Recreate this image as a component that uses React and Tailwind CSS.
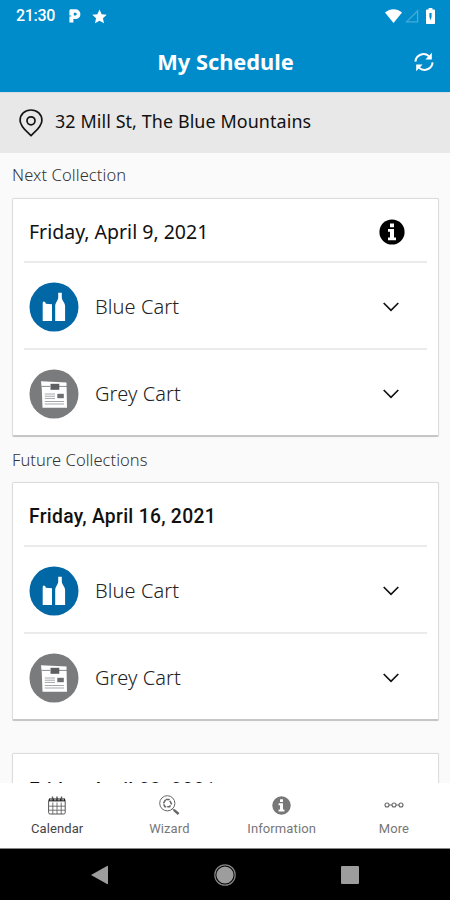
import React, { useState } from 'react';

const COLLECTIONS = [
  { id: 1, date: 'Friday, April 9, 2021', label: 'Next Collection', next: true, carts: ['Blue Cart', 'Grey Cart'] },
  { id: 2, date: 'Friday, April 16, 2021', label: 'Future Collections', carts: ['Blue Cart', 'Grey Cart'] },
  { id: 3, date: 'Friday, April 23, 2021', carts: [] },
];

function StatusBar() {
  return (
    <div className="flex h-8 items-center pl-4 pr-[15px] text-white">
      <span className="font-['Roboto',sans-serif] text-[16px] font-medium leading-8 tracking-[-0.3px]">21:30</span>
      <svg className="ml-[14px]" width="12" height="14" viewBox="0 0 12 14" aria-hidden="true">
        <path fillRule="evenodd" fill="currentColor" d="M2 .3H6.5A4.9 4.9 0 0 1 6.5 10.1H4.4V13.5H.4V7.6H2.2V6.4H.4V2C.4.9 1 .3 2 .3ZM4.8 3.8V6.6H6.3A1.4 1.4 0 0 0 6.3 3.8Z" />
      </svg>
      <svg className="ml-[11px]" width="15" height="15" viewBox="0 0 24 24" aria-hidden="true">
        <path fill="currentColor" d="M12 .8l3.4 7.5 8.2.9-6.1 5.5 1.7 8.1-7.2-4.1-7.2 4.1 1.7-8.1L.4 9.2l8.2-.9z" />
      </svg>
      <svg className="ml-auto" width="17" height="14" viewBox="0 0 17 14" aria-hidden="true">
        <path fill="currentColor" d="M0 3.6C5-1 12-1 17 3.6L8.5 14Z" />
      </svg>
      <svg className="ml-[3px] text-[#45abd9]" width="14" height="14" viewBox="0 0 14 14" aria-hidden="true">
        <path fill="none" stroke="currentColor" strokeWidth="1.3" d="M12.6 1.8V12.9H1.5Z" />
      </svg>
      <svg className="ml-[7px]" width="9" height="16" viewBox="0 0 9 16" aria-hidden="true">
        <path fill="currentColor" d="M2.6 0H6.4V1.5H8C8.6 1.5 9 1.9 9 2.5V15C9 15.6 8.6 16 8 16H1C.4 16 0 15.6 0 15V2.5C0 1.9.4 1.5 1 1.5H2.6Z" />
        <path fill="#008ccb" d="M3.4 5H5.6V8.5L4.9 11.5H4.1L3.4 8.5Z" />
      </svg>
    </div>
  );
}

function RefreshIcon() {
  return (
    <svg width="20" height="20" viewBox="0 0 20 20" fill="none" stroke="currentColor" strokeWidth="2" aria-hidden="true">
      <path d="M1.4 9.7A8.2 8.2 0 0 1 15 4.2" />
      <path d="M18.6 10.3A8.2 8.2 0 0 1 5 15.8" />
      <path fill="currentColor" stroke="none" d="M17.8 .8V7.4H11.4Z" />
      <path fill="currentColor" stroke="none" d="M2.2 19.2V12.6H8.6Z" />
    </svg>
  );
}

function PinIcon() {
  return (
    <svg width="24" height="28" viewBox="0 0 24 28" fill="none" stroke="#151515" strokeWidth="1.7" aria-hidden="true">
      <path d="M12 26.6C8.8 23.4 1.1 17.8 1.1 11.4C1.1 5.5 5.8 1 12 1S22.9 5.5 22.9 11.4C22.9 17.8 15.2 23.4 12 26.6Z" />
      <circle cx="12" cy="11.8" r="4" />
    </svg>
  );
}

function InfoIcon({ size }) {
  return (
    <svg width={size} height={size} viewBox="0 0 26 26" aria-hidden="true">
      <circle cx="13" cy="13" r="12.6" fill="currentColor" />
      <path fill="#fff" d="M11 4.5H15V8.2H11ZM9 10H15V18.5H17V21.3H9V18.5H11V12.7H9Z" />
    </svg>
  );
}

function BlueCartIcon() {
  return (
    <svg width="50" height="50" viewBox="0 0 50 50" aria-hidden="true">
      <circle cx="25" cy="25" r="24.5" fill="#0268a5" />
      <path fill="#fff" d="M14 19.4L16.2 19.9L16.8 21.8L23 22.2V39H13.7V21.5ZM29.2 10.8H32.8V15.5C33 19 36.1 20.5 36.1 24V39H26.2V24C26.2 20.5 29 19 29.2 15.5Z" />
    </svg>
  );
}

function GreyCartIcon() {
  return (
    <svg width="50" height="50" viewBox="0 0 50 50" aria-hidden="true">
      <circle cx="25" cy="25" r="24.5" fill="#797b7d" />
      <path fill="#fff" d="M12 12.3L37.5 13.5L38 38.7H13.5L12.8 20Z" />
      <path stroke="#797b7d" strokeWidth=".9" d="M12.5 17.4H21M30 17.4H38" />
      <path fill="#5d5f61" d="M21.5 14.8H30.3V20.8H21.5Z" />
      <path fill="#6c6e70" d="M28.3 24.8H34.8V29.2H28.3Z" />
      <path stroke="#a5a7a9" strokeWidth="1" d="M15.8 25H26M15.8 27.2H26M15.8 29.4H26M15.8 32.5H35M15.8 35H35" />
    </svg>
  );
}

const CART_ICONS = {
  'Blue Cart': <BlueCartIcon />,
  'Grey Cart': <GreyCartIcon />,
};

function Chevron() {
  return (
    <svg width="16" height="10" viewBox="0 0 16 10" fill="none" stroke="#111" strokeWidth="1.7" aria-hidden="true">
      <path d="M.7 1L8 8.3L15.3 1" />
    </svg>
  );
}

function CartRow({ name }) {
  return (
    <button type="button" className="flex h-[87px] w-full items-center border-t-2 border-[#ebebeb] pl-[5px] pr-7 pt-[2px] text-left">
      {CART_ICONS[name]}
      <span className="ml-4 font-['Noto_Sans',sans-serif] text-[20px] font-light tracking-[0.1px] text-[#222]">{name}</span>
      <span className="ml-auto">
        <Chevron />
      </span>
    </button>
  );
}

function CollectionCard({ date, next, carts }) {
  return (
    <section className="h-[239px] shrink-0 rounded-[2px] border border-b-2 border-[#dcdcdc] border-b-[#c6c6c6] bg-white px-[11px] shadow-[0_0_1px_#ddd]">
      <div className={`flex items-center justify-between pl-[5px] pr-[22px] ${carts.length ? 'h-[62px] pt-[3px]' : 'h-[67px] pt-1'}`}>
        <h3
          className={
            next
              ? "font-['Noto_Sans',sans-serif] text-[19.5px] text-[#111]"
              : "pt-[3px] font-['Roboto',sans-serif] text-[19.3px] font-medium tracking-[0.3px] text-[#111]"
          }
        >
          {date}
        </h3>
        {next && (
          <span className="text-black">
            <InfoIcon size={26} />
          </span>
        )}
      </div>
      {carts.map((name) => (
        <CartRow key={name} name={name} />
      ))}
    </section>
  );
}

function CalendarIcon() {
  return (
    <svg width="18" height="19" viewBox="0 0 18 19" fill="none" stroke="#555" aria-hidden="true">
      <rect x=".6" y="3" width="16.6" height="15" rx="1.5" />
      <path fill="#222" stroke="none" d="M1 2.5H17V5.4H1Z" />
      <path stroke="#fff" strokeWidth="1" d="M3 2.5V4.5M7 2.5V4.5M11 2.5V4.5M15 2.5V4.5" />
      <path strokeWidth="1.4" d="M4.5 .5V4.5M9 .5V4.5M13.5 .5V4.5" />
      <path strokeWidth=".8" d="M1 10.2H17M1 14.2H17M4.8 6.5V18M9 6.5V18M13.2 6.5V18" />
    </svg>
  );
}

function WizardIcon() {
  return (
    <svg width="21" height="20" viewBox="0 0 21 20" fill="none" stroke="#666" aria-hidden="true">
      <circle cx="8.3" cy="8.3" r="7.6" strokeWidth="1" />
      <path strokeWidth="1.5" strokeDasharray="4 1" d="M6.7 4.5H10L12.4 8.7L10.6 11.7H6L4.3 8.7Z" />
      <path strokeWidth="1" d="M13 13.2L15 15.2" />
      <path strokeWidth="2.4" d="M14.8 14.9L19.6 19" />
    </svg>
  );
}

function MoreIcon() {
  return (
    <svg width="20" height="6" viewBox="0 0 20 6" fill="none" stroke="#666" strokeWidth="1.1" aria-hidden="true">
      <path d="M5 3H8M12 3H15" />
      <circle cx="3" cy="3" r="2" />
      <circle cx="10" cy="3" r="2" />
      <circle cx="17" cy="3" r="2" />
    </svg>
  );
}

const TABS = [
  { name: 'Calendar', icon: <CalendarIcon /> },
  { name: 'Wizard', icon: <WizardIcon /> },
  { name: 'Information', icon: <InfoIcon size={19} /> },
  { name: 'More', icon: <MoreIcon /> },
];

export default function App() {
  const [activeTab, setActiveTab] = useState('Calendar');

  return (
    <div className="flex h-[900px] w-[450px] flex-col overflow-hidden bg-[#fafafa]">
      {/* Header */}
      <header className="h-[92px] shrink-0 bg-[#008ccb] text-white">
        <StatusBar />
        <div className="grid h-[60px] grid-cols-[40px_1fr_40px] items-center">
          <h1 className="col-start-2 pl-px text-center font-['Noto_Sans',sans-serif] text-[21.8px] font-bold leading-[58px]">My Schedule</h1>
          <button type="button" className="pl-1" aria-label="Refresh">
            <RefreshIcon />
          </button>
        </div>
      </header>

      {/* Address */}
      <div className="flex h-[61px] shrink-0 items-center border-t border-[#d5dee2] bg-[#e8e8e8] pl-[19px]">
        <PinIcon />
        <span className="ml-3 pb-[3px] font-['Noto_Sans',sans-serif] text-[17.9px] tracking-[0.1px] text-[#111]">32 Mill St, The Blue Mountains</span>
      </div>

      {/* Collections */}
      <main className="flex min-h-0 flex-1 flex-col overflow-hidden pl-3 pr-[11px]">
        {COLLECTIONS.map((c) => (
          <React.Fragment key={c.id}>
            <h2
              className={
                c.next
                  ? "h-[45px] shrink-0 font-['Noto_Sans',sans-serif] text-[16.5px] font-light leading-[44px] tracking-[0.1px] text-[#333]"
                  : c.label
                    ? "h-[45px] shrink-0 font-['Noto_Sans',sans-serif] text-[16.5px] font-light leading-[45px] tracking-[0.05px] text-[#333]"
                    : 'h-8 shrink-0'
              }
            >
              {c.label}
            </h2>
            <CollectionCard date={c.date} next={c.next} carts={c.carts} />
          </React.Fragment>
        ))}
      </main>

      {/* Tabs */}
      <nav className="grid h-[66px] shrink-0 grid-cols-4 border-b border-[#888] bg-white pl-px pt-3">
        {TABS.map((tab) => (
          <button
            key={tab.name}
            type="button"
            onClick={() => setActiveTab(tab.name)}
            className={`flex flex-col items-center ${activeTab === tab.name ? 'text-[#444]' : 'text-[#777]'}`}
          >
            <span className="flex h-5 items-center">{tab.icon}</span>
            <span className="mt-1 font-['Roboto',sans-serif] text-[13px] leading-5 tracking-[0.1px]">{tab.name}</span>
          </button>
        ))}
      </nav>

      {/* System navigation */}
      <div className="flex h-[51px] shrink-0 items-center bg-black pl-[91px]">
        <svg width="17" height="20" viewBox="0 0 17 20" aria-hidden="true">
          <path fill="#9d9d9d" d="M0 10L16 1Q17 .5 17 1.6V18.4Q17 19.5 16 19Z" />
        </svg>
        <svg className="ml-[106px]" width="22" height="22" viewBox="0 0 22 22" aria-hidden="true">
          <circle cx="11" cy="11" r="10.2" fill="none" stroke="#858585" strokeWidth="1.2" />
          <circle cx="11" cy="11" r="8.6" fill="#9d9d9d" />
        </svg>
        <span className="ml-[105px] h-[18px] w-[18px] rounded-[1px] bg-[#9d9d9d]" />
      </div>
    </div>
  );
}
